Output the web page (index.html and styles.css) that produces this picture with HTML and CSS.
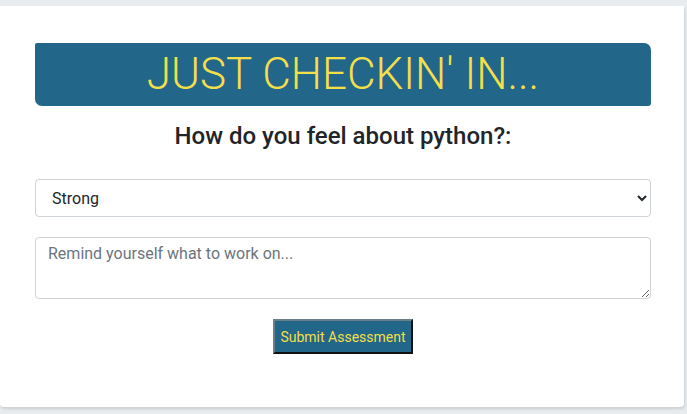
FILE: index.html
```html
<!DOCTYPE html>
<html>
<head>
<meta charset="utf-8">
<link rel="stylesheet" href="styles.css">
</head>
<body>
<main class="card">
  <div class="banner">JUST CHECKIN' IN...</div>
  <h2 class="question">How do you feel about python?:</h2>
  <form class="form">
    <select class="field select">
      <option>Strong</option>
      <option>Okay</option>
      <option>Weak</option>
    </select>
    <textarea class="field notes" placeholder="Remind yourself what to work on..."></textarea>
    <button type="button" class="submit">Submit Assessment</button>
  </form>
</main>
</body>
</html>
```
FILE: styles.css
```css
html, body {
  margin: 0;
  padding: 0;
}
body {
  background: #e9ecee;
  font-family: Roboto, "Liberation Sans", sans-serif;
  color: #212529;
  height: 414px;
  overflow: hidden;
}
.card {
  margin: 6px 3px 0 0;
  background: #fff;
  padding: 37px 33px 53px 35px;
  box-shadow: 1px 2px 3px rgba(0,0,0,0.12);
  border-radius: 0 0 4px 4px;
}
.banner {
  height: 63px;
  background: #226689;
  color: #f2df4a;
  font-weight: 300;
  font-size: 44px;
  line-height: 63px;
  text-align: center;
  border-radius: 2px 7px 3px 7px;
}
.question {
  margin: 16px 0 0;
  font-size: 24px;
  font-weight: 500;
  line-height: 29px;
  text-align: center;
}
.form {
  display: flex;
  flex-direction: column;
  align-items: center;
  margin-top: 28px;
}
.field {
  box-sizing: border-box;
  width: 100%;
  border: 1px solid #ced4da;
  border-radius: 4px;
  font-family: Roboto, "Liberation Sans", sans-serif;
  font-size: 16px;
  color: #212529;
  background: #fff;
}
.select {
  height: 38px;
  padding: 0 8px 0 12px;
}
.notes {
  margin-top: 20px;
  height: 62px;
  padding: 6px 12px;
  resize: vertical;
}
.notes::placeholder {
  color: #6c757d;
}
.submit {
  margin-top: 20px;
  width: 140px;
  height: 35px;
  background: #226689;
  color: #f2df4a;
  font-family: Roboto, "Liberation Sans", sans-serif;
  font-size: 14px;
  border: 2px solid;
  border-color: #6b7f8a #111 #111 #6b7f8a;
  padding: 0;
}
```
